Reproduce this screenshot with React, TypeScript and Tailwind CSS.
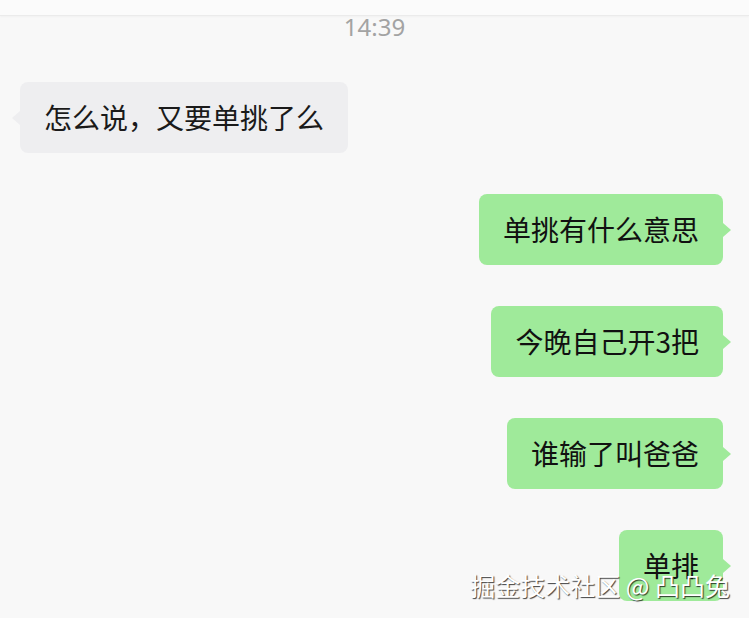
import React from "react";

const cjk = { fontFamily: '"Noto Sans CJK SC", "Noto Sans", sans-serif' };

function Left({ text }: { text: string }) {
  return (
    <div className="relative self-start ml-[20px]">
      <span className="absolute left-[-8px] top-1/2 -translate-y-1/2 w-0 h-0 border-y-[7px] border-y-transparent border-r-[8px] border-r-[#eeeef0]" />
      <div
        className="bg-[#eeeef0] rounded-[8px] px-[24px] py-[16px] text-[28px] leading-[39px] text-[#1a1a1a] whitespace-nowrap"
        style={cjk}
      >
        {text}
      </div>
    </div>
  );
}

function Right({ text }: { text: string }) {
  return (
    <div className="relative self-end mr-[26px]">
      <span className="absolute right-[-8px] top-1/2 -translate-y-1/2 w-0 h-0 border-y-[7px] border-y-transparent border-l-[8px] border-l-[#9fea9a]" />
      <div
        className="bg-[#9fea9a] rounded-[8px] px-[24px] py-[16px] text-[28px] leading-[39px] text-[#111] whitespace-nowrap"
        style={cjk}
      >
        {text}
      </div>
    </div>
  );
}

export default function App() {
  return (
    <div className="relative w-full h-[618px] bg-[#f8f8f8] overflow-hidden">
      <div className="h-[16px] bg-[#fbfbfb] border-b border-[#ebebeb] shadow-[0_1px_2px_rgba(0,0,0,0.03)]" />
      <div
        className="text-center text-[24px] leading-[18px] pt-[2px] text-[#a3a3a3]"
        style={{ fontFamily: '"Noto Sans", sans-serif' }}
      >
        14:39
      </div>
      <div className="flex flex-col gap-[41px] pt-[46px]">
        <Left text="怎么说，又要单挑了么" />
        <Right text="单挑有什么意思" />
        <Right text="今晚自己开3把" />
        <Right text="谁输了叫爸爸" />
        <Right text="单排" />
      </div>
      <div
        className="absolute right-[19px] bottom-[18px] text-[25px] leading-[30px] text-white whitespace-pre [text-shadow:1px_1px_1px_rgba(0,0,0,0.75)]"
        style={cjk}
      >
        掘金技术社区 @ 凸凸兔
      </div>
    </div>
  );
}
